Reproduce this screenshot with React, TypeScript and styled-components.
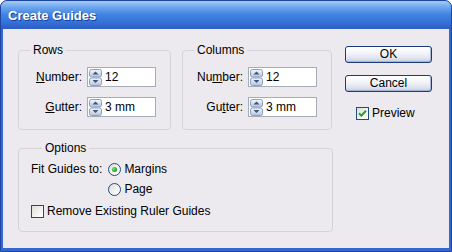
import styled, { createGlobalStyle } from 'styled-components';

const GlobalStyle = createGlobalStyle`
  html, body {
    margin: 0;
    padding: 0;
    background: #ffffff;
  }
  body {
    font-family: "Liberation Sans", Arial, sans-serif;
    font-size: 12px;
    color: #000000;
  }
`;

const Window = styled.div`
  width: 452px;
  height: 252px;
  box-sizing: border-box;
  border: 1px solid #1d45a3;
  border-radius: 7px 7px 0 0;
  overflow: hidden;
  display: flex;
  flex-direction: column;
  background: #3467d0;
`;

const TitleBar = styled.div`
  height: 28px;
  flex: none;
  display: flex;
  align-items: center;
  padding-left: 7px;
  background: linear-gradient(#a6cdf7 0%, #72a9ee 20%, #4184e2 48%, #3674da 72%, #2c5dc3 100%);
  color: #ffffff;
  font-weight: bold;
  font-size: 13px;
  text-shadow: 1px 1px 0 #1a3f95;
`;

const Body = styled.div`
  flex: 1;
  margin: 0 2px 3px;
  background: #eceaee;
  display: flex;
  gap: 12px;
  padding: 14px 0 0 15px;
`;

const LeftColumn = styled.div`
  width: 315px;
  display: flex;
  flex-direction: column;
  gap: 11px;
`;

const GroupRow = styled.div`
  display: flex;
  gap: 11px;
`;

const Group = styled.fieldset<{ $width: number; $pad: string }>`
  margin: 0;
  min-width: 0;
  width: ${p => p.$width}px;
  box-sizing: border-box;
  border: 1px solid #d5d3d9;
  border-radius: 4px;
  padding: ${p => p.$pad};
`;

const Legend = styled.legend`
  margin-left: 11px;
  padding: 0 3px;
  font-size: 12px;
  line-height: 14px;
`;

const FieldGrid = styled.div<{ $labelWidth: number }>`
  display: grid;
  grid-template-columns: ${p => p.$labelWidth}px 69px;
  column-gap: 5px;
  row-gap: 10px;
  align-items: center;
`;

const FieldLabel = styled.label`
  text-align: right;
  white-space: nowrap;
`;

const SpinBox = styled.div`
  height: 20px;
  box-sizing: border-box;
  border: 1px solid #a7adb8;
  background: #ffffff;
  display: flex;
  align-items: center;
  gap: 3px;
  padding-left: 1px;
  font-size: 12px;
`;

const RightColumn = styled.div`
  width: 87px;
  display: flex;
  flex-direction: column;
  padding-top: 3px;
  gap: 12px;
`;

const PushButton = styled.button`
  width: 87px;
  height: 17px;
  box-sizing: border-box;
  padding: 0;
  border: 1px solid #1c3b7a;
  border-radius: 3px;
  background: linear-gradient(#ffffff 0%, #f1f3f9 45%, #d9dfec 82%, #bcc7de 100%);
  box-shadow: inset -1px -1px 0 #a9b6d3;
  font-family: "Liberation Sans", Arial, sans-serif;
  font-size: 12px;
  line-height: 15px;
  color: #000000;
`;

const CheckRow = styled.div<{ $indent: number; $top: number }>`
  display: flex;
  align-items: center;
  gap: 3px;
  height: 16px;
  margin-left: ${p => p.$indent}px;
  margin-top: ${p => p.$top}px;
  white-space: nowrap;
`;

const Box = styled.span`
  width: 13px;
  height: 13px;
  box-sizing: border-box;
  border: 1px solid #1f4e7e;
  background: linear-gradient(135deg, #dcdcd8 0%, #f4f4f2 60%, #ffffff 100%);
  display: flex;
  align-items: center;
  justify-content: center;
`;

const FitGrid = styled.div`
  display: grid;
  grid-template-columns: auto auto;
  justify-content: start;
  column-gap: 6px;
  row-gap: 4px;
  align-items: center;
`;

const RadioRow = styled.div`
  display: flex;
  align-items: center;
  gap: 3px;
  height: 16px;
`;

const Radio = styled.span<{ $checked?: boolean }>`
  width: 13px;
  height: 13px;
  box-sizing: border-box;
  border-radius: 50%;
  border: 1px solid #1f4e7e;
  background: linear-gradient(135deg, #dcdcd8 0%, #f4f4f2 60%, #ffffff 100%);
  display: flex;
  align-items: center;
  justify-content: center;

  &::after {
    content: '';
    display: ${p => (p.$checked ? 'block' : 'none')};
    width: 5px;
    height: 5px;
    border-radius: 50%;
    background: radial-gradient(circle at 35% 35%, #7fe07f 0%, #2aa52a 60%, #1d7f1d 100%);
  }
`;

const Spinner = () => (
  <svg width="13" height="17" viewBox="0 0 13 17">
    <defs>
      <linearGradient id="spin" x1="0" y1="0" x2="0" y2="1">
        <stop offset="0" stopColor="#f5f8fd" />
        <stop offset="1" stopColor="#b5c3dd" />
      </linearGradient>
    </defs>
    <rect x="0.5" y="0.5" width="12" height="7.5" rx="2" fill="url(#spin)" stroke="#8d9fbe" />
    <rect x="0.5" y="9" width="12" height="7.5" rx="2" fill="url(#spin)" stroke="#8d9fbe" />
    <path d="M3.5 5.6 L6.5 2.6 L9.5 5.6 Z" fill="#3f5479" />
    <path d="M3.5 11 L6.5 14 L9.5 11 Z" fill="#3f5479" />
  </svg>
);

const Check = () => (
  <svg width="9" height="9" viewBox="0 0 9 9">
    <path d="M1 4.2 L3.4 6.6 L8 1.8" fill="none" stroke="#21a121" strokeWidth="2" />
  </svg>
);

const SpinField = ({ value }: { value: string }) => (
  <SpinBox>
    <Spinner />
    <span>{value}</span>
  </SpinBox>
);

export default function App() {
  return (
    <>
      <GlobalStyle />
      <Window>
        <TitleBar>Create Guides</TitleBar>
        <Body>
          <LeftColumn>
            <GroupRow>
              <Group $width={153} $pad="10px 0 12px 0">
                <Legend>Rows</Legend>
                <FieldGrid $labelWidth={63}>
                  <FieldLabel><u>N</u>umber:</FieldLabel>
                  <SpinField value="12" />
                  <FieldLabel><u>G</u>utter:</FieldLabel>
                  <SpinField value="3 mm" />
                </FieldGrid>
              </Group>
              <Group $width={150} $pad="10px 0 12px 0">
                <Legend>Columns</Legend>
                <FieldGrid $labelWidth={60}>
                  <FieldLabel>Nu<u>m</u>ber:</FieldLabel>
                  <SpinField value="12" />
                  <FieldLabel>Gu<u>t</u>ter:</FieldLabel>
                  <SpinField value="3 mm" />
                </FieldGrid>
              </Group>
            </GroupRow>
            <Group $width={315} $pad="6px 0 12px 12px">
              <Legend>Options</Legend>
              <FitGrid>
                <span>Fit Guides to:</span>
                <RadioRow>
                  <Radio $checked />
                  Margins
                </RadioRow>
                <span />
                <RadioRow>
                  <Radio />
                  Page
                </RadioRow>
              </FitGrid>
              <CheckRow $indent={0} $top={6}>
                <Box />
                Remove Existing Ruler Guides
              </CheckRow>
            </Group>
          </LeftColumn>
          <RightColumn>
            <PushButton>OK</PushButton>
            <PushButton>Cancel</PushButton>
            <CheckRow $indent={11} $top={1}>
              <Box>
                <Check />
              </Box>
              Preview
            </CheckRow>
          </RightColumn>
        </Body>
      </Window>
    </>
  );
}
